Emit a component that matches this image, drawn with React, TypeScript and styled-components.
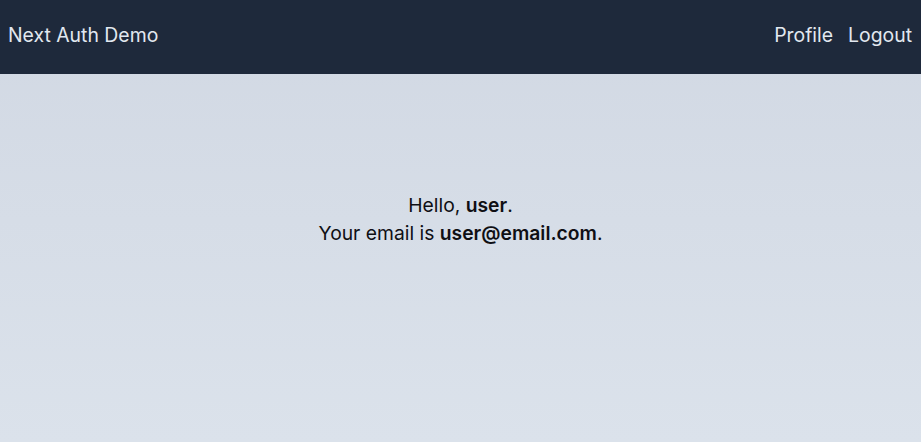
import React from "react";
import styled, { createGlobalStyle } from "styled-components";

const Global = createGlobalStyle`
  html, body { margin: 0; padding: 0; }
  body { font-family: Inter, "Noto Sans", sans-serif; }
  * { box-sizing: border-box; }
`;

const Page = styled.div`
  min-height: 442px;
  display: flex;
  flex-direction: column;
  background: linear-gradient(to bottom, #d1d8e3, #dbe2eb);
`;

const Header = styled.header`
  height: 74px;
  background: #1e293b;
  color: #e2e8f0;
  display: flex;
  align-items: center;
  justify-content: space-between;
  padding: 0 9px 4px 8px;
  font-size: 19.4px;
`;

const Brand = styled.a`
  color: inherit;
  text-decoration: none;
`;

const Nav = styled.nav`
  display: flex;
  gap: 15px;
`;

const NavLink = styled.a`
  color: inherit;
  text-decoration: none;
`;

const Main = styled.main`
  flex: 1;
  display: flex;
  align-items: center;
  justify-content: center;
  padding-bottom: 78px;
`;

const Message = styled.div`
  text-align: center;
  color: #0f0f14;
  font-size: 19.3px;
  line-height: 28px;
  p { margin: 0; }
  b { font-weight: 600; }
`;

export default function App() {
  return (
    <>
      <Global />
      <Page>
        <Header>
          <Brand href="#">Next Auth Demo</Brand>
          <Nav>
            <NavLink href="#">Profile</NavLink>
            <NavLink href="#">Logout</NavLink>
          </Nav>
        </Header>
        <Main>
          <Message>
            <p>
              Hello, <b>user</b>.
            </p>
            <p>
              Your email is <b>user@email.com</b>.
            </p>
          </Message>
        </Main>
      </Page>
    </>
  );
}
